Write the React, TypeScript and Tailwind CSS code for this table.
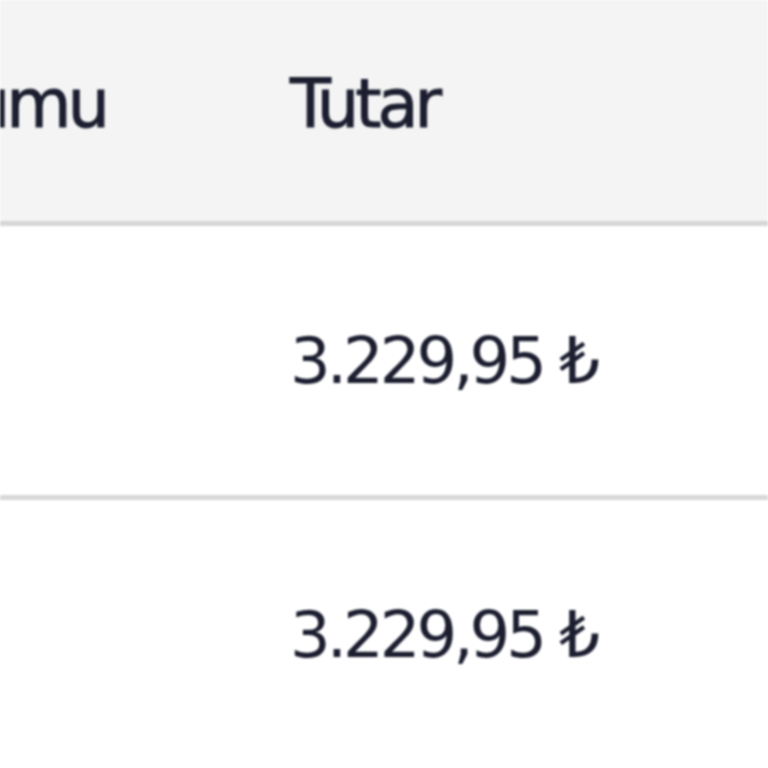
const rows = ["3.229,95 ₺", "3.229,95 ₺"];

const baseFont = "font-['DejaVu_Sans',sans-serif] text-[#1c1e30] whitespace-nowrap";
const headFont = `${baseFont} text-[67px] tracking-[-4px] [-webkit-text-stroke:1px_#1c1e30]`;
const cellFont = `${baseFont} text-[64px] tracking-[-4px]`;

export default function App() {
  return (
    <div className="w-[768px] h-[768px] overflow-hidden bg-white blur-[1px]">
      {/* header */}
      <div className="flex h-[226px] bg-[#f4f4f4] border-b-[5px] border-[#d6d6d6]">
        <div className="w-[290px] flex justify-end items-center pr-[184px] pb-[12px] overflow-hidden">
          <span className={headFont}>Durumu</span>
        </div>
        <div className="flex-1 flex items-center pb-[12px]">
          <span className={headFont}>Tutar</span>
        </div>
      </div>
      {/* rows */}
      {rows.map((amount, i) => (
        <div key={i} className="flex h-[274px] border-b-[5px] border-[#d8d8d8]">
          <div className="w-[290px]" />
          <div className="flex-1 flex items-center">
            <span className={cellFont}>{amount}</span>
          </div>
        </div>
      ))}
    </div>
  );
}
